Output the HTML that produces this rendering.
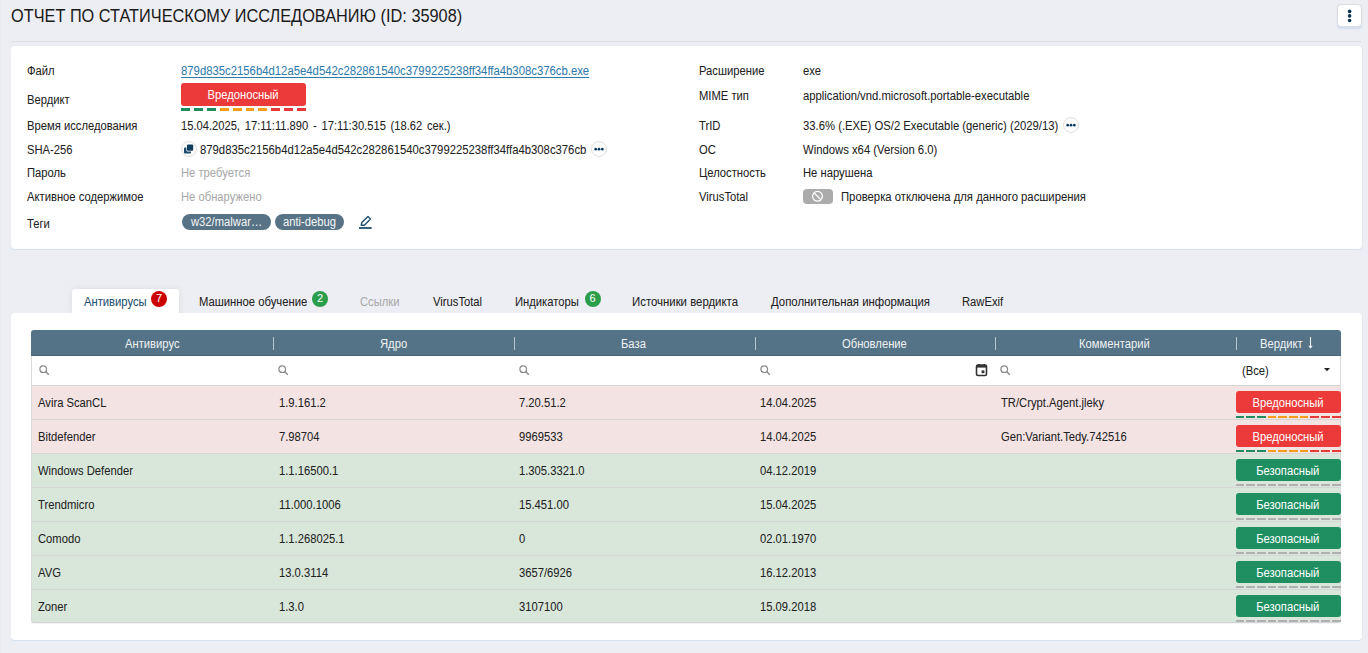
<!DOCTYPE html>
<html><head><meta charset="utf-8"><style>
*{box-sizing:border-box}
html,body{margin:0;padding:0}
body{width:1368px;height:653px;overflow:hidden;background:#edeef3;position:relative;font-family:"Liberation Sans",sans-serif;color:#212121}
.t{position:absolute;white-space:nowrap;font-size:12px;line-height:14px;transform:scaleX(0.936);transform-origin:0 0;-webkit-text-stroke:0.04px currentColor}
.gray{color:#a9a9a9}
.card{position:absolute;background:#fff;border-radius:4px;box-shadow:0 1px 0 #d2e2f2, 0.5px 0 1px rgba(0,0,0,0.03)}
.badge{position:absolute;border-radius:3px;color:#fff;font-size:12px;line-height:24px;display:flex;justify-content:center;white-space:nowrap}
.badge span{display:block;transform:scaleX(0.936)}
.red{background:#ec3a3a}
.grn{background:#1f8f62}
.dash{position:absolute;display:flex;height:3px}
.dash i{display:block;flex:1;height:100%}
.g{background:#1f8c5f}.o{background:#f59d1b}.r{background:#e5393a}.s{background:#b0b0b0}
.pill{position:absolute;height:16px;border-radius:8px;background:#587385}
.circ{position:absolute;border-radius:50%;border:1px solid #dedede;background:#fff}
.sep{position:absolute;width:1px;background:#b7c6d1}
.row{position:absolute;left:31px;width:1310px;height:34px;border-top:1px solid #d6d6d6;border-left:1px solid #d9d9d9;border-right:1px solid #d9d9d9}
.hdr{color:#eef2f5;-webkit-text-stroke:0}
.cnt{position:absolute;width:16px;height:16px;border-radius:50%;color:#fff;font-size:11px;line-height:14.5px;text-align:center}
</style></head><body>

<div style="position:absolute;left:0;top:0;width:1px;height:653px;background:#e8eaef"></div>
<div style="position:absolute;left:11px;top:6px;font-size:17.5px;line-height:20px;transform:scaleX(0.932);transform-origin:0 0;color:#1a1a1a;white-space:nowrap">ОТЧЕТ ПО СТАТИЧЕСКОМУ ИССЛЕДОВАНИЮ (ID: 35908)</div>
<div style="position:absolute;left:1337px;top:4.2px;width:25px;height:23.3px;background:#fff;border:1px solid #dcdde1;border-radius:4px;box-shadow:0 1.5px 1.5px rgba(120,170,230,0.22)"></div>
<svg style="position:absolute;left:1340px;top:5px" width="20" height="22" viewBox="1340 5 20 22"><circle cx="1349.6" cy="11.4" r="1.8" fill="#0e3353"/><circle cx="1349.6" cy="15.9" r="1.8" fill="#0e3353"/><circle cx="1349.6" cy="20.5" r="1.8" fill="#0e3353"/></svg>
<div style="position:absolute;left:11px;top:41px;width:1350px;height:1px;background:#dcdee4"></div>
<div class="card" style="left:11px;top:46px;width:1351px;height:203px"></div>
<div class="t " style="left:27px;top:64px;">Файл</div>
<div class="t " style="left:27px;top:93px;">Вердикт</div>
<div class="t " style="left:27px;top:119px;">Время исследования</div>
<div class="t " style="left:27px;top:143px;">SHA-256</div>
<div class="t " style="left:27px;top:166px;">Пароль</div>
<div class="t " style="left:27px;top:190px;">Активное содержимое</div>
<div class="t " style="left:27px;top:217px;">Теги</div>
<div class="t " style="left:699px;top:64px;">Расширение</div>
<div class="t " style="left:699px;top:89px;">MIME тип</div>
<div class="t " style="left:699px;top:119px;">TrID</div>
<div class="t " style="left:699px;top:143px;">ОС</div>
<div class="t " style="left:699px;top:166px;">Целостность</div>
<div class="t " style="left:699px;top:190px;">VirusTotal</div>
<div class="t " style="left:181px;top:64px;color:#2e7aab;text-decoration:underline;text-underline-offset:2px;transform:scaleX(0.9434)">879d835c2156b4d12a5e4d542c282861540c3799225238ff34ffa4b308c376cb.exe</div>
<div class="badge red" style="left:181px;top:83px;width:125px;height:23px"><span>Вредоносный</span></div>
<div class="dash" style="left:181px;top:108px;width:125px;gap:4px"><i class="g"></i><i class="g"></i><i class="g"></i><i class="o"></i><i class="o"></i><i class="o"></i><i class="o"></i><i class="r"></i><i class="r"></i><i class="r"></i></div>
<div class="t " style="left:181px;top:119px;word-spacing:1.8px;transform:scaleX(0.9300)">15.04.2025, 17:11:11.890 - 17:11:30.515 (18.62 сек.)</div>
<div class="circ" style="left:181px;top:141px;width:16px;height:16px"></div>
<svg style="position:absolute;left:181px;top:141px" width="16" height="16" viewBox="181 141 16 16"><rect x="184" y="147.4" width="7" height="6.2" rx="1" fill="#1d4d6e"/><rect x="186.4" y="144" width="7.4" height="7.4" rx="1.2" fill="#fff"/><rect x="187" y="144.6" width="6.2" height="6.2" rx="1" fill="#0f3d5e"/></svg>
<div class="t " style="left:199.5px;top:143px;;transform:scaleX(0.9424)">879d835c2156b4d12a5e4d542c282861540c3799225238ff34ffa4b308c376cb</div>
<div class="circ" style="left:591px;top:141px;width:16px;height:16px"></div>
<svg style="position:absolute;left:591px;top:141px" width="16" height="16" viewBox="-8 -8 16 16"><circle cx="-3.3" cy="0.2" r="1.35" fill="#0e3a5c"/><circle cx="0" cy="0.2" r="1.35" fill="#0e3a5c"/><circle cx="3.3" cy="0.2" r="1.35" fill="#0e3a5c"/></svg>
<div class="t gray" style="left:181px;top:166px;">Не требуется</div>
<div class="t gray" style="left:181px;top:190px;">Не обнаружено</div>
<div class="pill" style="left:182px;top:214px;width:89px"></div>
<div class="t " style="left:190.5px;top:215px;color:#f4f7f9;-webkit-text-stroke:0;transform:scaleX(0.9356)">w32/malwar…</div>
<div class="pill" style="left:275px;top:214px;width:69px"></div>
<div class="t " style="left:282.8px;top:215px;color:#f4f7f9;-webkit-text-stroke:0;transform:scaleX(0.9365)">anti-debug</div>
<svg style="position:absolute;left:358px;top:215px" width="15" height="15" viewBox="0 0 15 15"><path d="M3.2 10.3 L3.8 7.6 L10 1.5 L12.5 4 L6.3 10.2 Z" fill="none" stroke="#1d4e70" stroke-width="1.4" stroke-linejoin="round"/><line x1="1" y1="13" x2="13.6" y2="13" stroke="#1d4e70" stroke-width="1.8"/></svg>
<div class="t " style="left:803px;top:64px;">exe</div>
<div class="t " style="left:803px;top:89px;;transform:scaleX(0.9402)">application/vnd.microsoft.portable-executable</div>
<div class="t " style="left:803px;top:119px;;transform:scaleX(0.9403)">33.6% (.EXE) OS/2 Executable (generic) (2029/13)</div>
<div class="circ" style="left:1063.4px;top:117.4px;width:16px;height:16px"></div>
<svg style="position:absolute;left:1063.4px;top:117.4px" width="16" height="16" viewBox="-8 -8 16 16"><circle cx="-3.3" cy="0.2" r="1.35" fill="#0e3a5c"/><circle cx="0" cy="0.2" r="1.35" fill="#0e3a5c"/><circle cx="3.3" cy="0.2" r="1.35" fill="#0e3a5c"/></svg>
<div class="t " style="left:803px;top:143px;;transform:scaleX(0.9411)">Windows x64 (Version 6.0)</div>
<div class="t " style="left:803px;top:166px;">Не нарушена</div>
<div style="position:absolute;left:803px;top:189px;width:30px;height:14.6px;background:#ababab;border-radius:4px"></div>
<svg style="position:absolute;left:811px;top:190px" width="13" height="13" viewBox="0 0 13 13"><circle cx="6.5" cy="6.3" r="4.9" fill="none" stroke="#fff" stroke-width="1.3"/><line x1="3.1" y1="2.9" x2="9.9" y2="9.7" stroke="#fff" stroke-width="1.3"/></svg>
<div class="t " style="left:841px;top:190px;;transform:scaleX(0.9416)">Проверка отключена для данного расширения</div>
<div style="position:absolute;left:72px;top:289px;width:107px;height:26px;background:#fff;border-radius:3px 3px 0 0;box-shadow:0 0 7px rgba(30,40,60,0.09)"></div>
<div class="card" style="left:11px;top:313px;width:1351px;height:327px"></div>
<div class="t " style="left:84px;top:295px;color:#1d4e70">Антивирусы</div>
<div class="cnt" style="left:151px;top:291px;background:#c00">7</div>
<div class="t " style="left:199.2px;top:295px;;transform:scaleX(0.9393)">Машинное обучение</div>
<div class="cnt" style="left:312px;top:291px;background:#2c9e4b">2</div>
<div class="t gray" style="left:360.1px;top:295px;">Ссылки</div>
<div class="t " style="left:432.6px;top:295px;">VirusTotal</div>
<div class="t " style="left:515.2px;top:295px;">Индикаторы</div>
<div class="cnt" style="left:584.5px;top:291px;background:#2c9e4b">6</div>
<div class="t " style="left:632.3px;top:295px;;transform:scaleX(0.9490)">Источники вердикта</div>
<div class="t " style="left:770.6px;top:295px;;transform:scaleX(0.9475)">Дополнительная информация</div>
<div class="t " style="left:961.8px;top:295px;">RawExif</div>
<div style="position:absolute;left:31px;top:330px;width:1310px;height:26px;background:#557386;border-radius:3px 3px 0 0;border-bottom:1px solid #4b6678"></div>
<div class="t hdr" style="left:124.8px;top:337px;">Антивирус</div>
<div class="t hdr" style="left:379.5px;top:337px;">Ядро</div>
<div class="t hdr" style="left:621px;top:337px;">База</div>
<div class="t hdr" style="left:841.6px;top:337px;">Обновление</div>
<div class="t hdr" style="left:1079.2px;top:337px;">Комментарий</div>
<div class="t hdr" style="left:1259.9px;top:337px;">Вердикт</div>
<svg style="position:absolute;left:1306px;top:336px" width="9" height="14" viewBox="0 0 9 14"><line x1="4.5" y1="1" x2="4.5" y2="11" stroke="#eef2f5" stroke-width="1.1"/><path d="M2.3 9.8 L6.7 9.8 L4.5 12.7 Z" fill="#eef2f5"/></svg>
<div class="sep" style="left:273px;top:337px;height:13px"></div>
<div class="sep" style="left:513.5px;top:337px;height:13px"></div>
<div class="sep" style="left:754.5px;top:337px;height:13px"></div>
<div class="sep" style="left:995px;top:337px;height:13px"></div>
<div class="sep" style="left:1236px;top:337px;height:13px"></div>
<div style="position:absolute;left:31px;top:356px;width:1310px;height:30px;background:#fff;border-left:1px solid #d9d9d9;border-right:1px solid #d9d9d9;border-bottom:1px solid #d6d6d6"></div>
<svg style="position:absolute;left:38.5px;top:364.5px" width="11" height="11" viewBox="0 0 11 11"><circle cx="4.2" cy="4.2" r="3.3" fill="none" stroke="#8a8a8a" stroke-width="1.2"/><line x1="6.6" y1="6.6" x2="9.8" y2="9.8" stroke="#8a8a8a" stroke-width="1.4"/></svg>
<svg style="position:absolute;left:277.5px;top:364.5px" width="11" height="11" viewBox="0 0 11 11"><circle cx="4.2" cy="4.2" r="3.3" fill="none" stroke="#8a8a8a" stroke-width="1.2"/><line x1="6.6" y1="6.6" x2="9.8" y2="9.8" stroke="#8a8a8a" stroke-width="1.4"/></svg>
<svg style="position:absolute;left:518.5px;top:364.5px" width="11" height="11" viewBox="0 0 11 11"><circle cx="4.2" cy="4.2" r="3.3" fill="none" stroke="#8a8a8a" stroke-width="1.2"/><line x1="6.6" y1="6.6" x2="9.8" y2="9.8" stroke="#8a8a8a" stroke-width="1.4"/></svg>
<svg style="position:absolute;left:759.5px;top:364.5px" width="11" height="11" viewBox="0 0 11 11"><circle cx="4.2" cy="4.2" r="3.3" fill="none" stroke="#8a8a8a" stroke-width="1.2"/><line x1="6.6" y1="6.6" x2="9.8" y2="9.8" stroke="#8a8a8a" stroke-width="1.4"/></svg>
<svg style="position:absolute;left:1000px;top:364.5px" width="11" height="11" viewBox="0 0 11 11"><circle cx="4.2" cy="4.2" r="3.3" fill="none" stroke="#8a8a8a" stroke-width="1.2"/><line x1="6.6" y1="6.6" x2="9.8" y2="9.8" stroke="#8a8a8a" stroke-width="1.4"/></svg>
<svg style="position:absolute;left:975px;top:363px" width="13" height="14" viewBox="0 0 13 14"><rect x="1.5" y="2" width="10" height="10.5" rx="1.5" fill="none" stroke="#333" stroke-width="1.6"/><rect x="1.5" y="2" width="10" height="2.6" fill="#333"/><rect x="3" y="1" width="1.5" height="2" fill="#333"/><rect x="8.5" y="1" width="1.5" height="2" fill="#333"/><rect x="6.6" y="7.4" width="2.8" height="2.8" fill="#333"/></svg>
<div class="t " style="left:1241.7px;top:364px;">(Все)</div>
<svg style="position:absolute;left:1324px;top:368px" width="6" height="4" viewBox="0 0 6 4"><path d="M0 0 L6 0 L3 3.2 Z" fill="#222"/></svg>
<div class="row" style="top:385px;background:#f4e3e3"></div>
<div class="t " style="left:38.1px;top:396px;">Avira ScanCL</div>
<div class="t " style="left:279px;top:396px;">1.9.161.2</div>
<div class="t " style="left:519.4px;top:396px;">7.20.51.2</div>
<div class="t " style="left:760.2px;top:396px;">14.04.2025</div>
<div class="t " style="left:1001px;top:396px;">TR/Crypt.Agent.jleky</div>
<div class="badge red" style="left:1235.5px;top:391px;width:105px;height:22px"><span>Вредоносный</span></div>
<div class="dash" style="left:1235.5px;top:415.5px;width:105px;gap:2px;height:2.5px"><i class="g"></i><i class="g"></i><i class="g"></i><i class="o"></i><i class="o"></i><i class="o"></i><i class="o"></i><i class="r"></i><i class="r"></i><i class="r"></i></div>
<div class="row" style="top:419px;background:#f4e3e3"></div>
<div class="t " style="left:38.1px;top:430px;">Bitdefender</div>
<div class="t " style="left:279px;top:430px;">7.98704</div>
<div class="t " style="left:519.4px;top:430px;">9969533</div>
<div class="t " style="left:760.2px;top:430px;">14.04.2025</div>
<div class="t " style="left:1001px;top:430px;">Gen:Variant.Tedy.742516</div>
<div class="badge red" style="left:1235.5px;top:425px;width:105px;height:22px"><span>Вредоносный</span></div>
<div class="dash" style="left:1235.5px;top:449.5px;width:105px;gap:2px;height:2.5px"><i class="g"></i><i class="g"></i><i class="g"></i><i class="o"></i><i class="o"></i><i class="o"></i><i class="o"></i><i class="r"></i><i class="r"></i><i class="r"></i></div>
<div class="row" style="top:453px;background:#d8e7da"></div>
<div class="t " style="left:38.1px;top:464px;">Windows Defender</div>
<div class="t " style="left:279px;top:464px;">1.1.16500.1</div>
<div class="t " style="left:519.4px;top:464px;">1.305.3321.0</div>
<div class="t " style="left:760.2px;top:464px;">04.12.2019</div>
<div class="badge grn" style="left:1235.5px;top:459px;width:105px;height:22px"><span>Безопасный</span></div>
<div class="dash" style="left:1235.5px;top:483.5px;width:105px;gap:2px;height:2.5px"><i class="s"></i><i class="s"></i><i class="s"></i><i class="s"></i><i class="s"></i><i class="s"></i><i class="s"></i><i class="s"></i><i class="s"></i><i class="s"></i></div>
<div class="row" style="top:487px;background:#d8e7da"></div>
<div class="t " style="left:38.1px;top:498px;">Trendmicro</div>
<div class="t " style="left:279px;top:498px;">11.000.1006</div>
<div class="t " style="left:519.4px;top:498px;">15.451.00</div>
<div class="t " style="left:760.2px;top:498px;">15.04.2025</div>
<div class="badge grn" style="left:1235.5px;top:493px;width:105px;height:22px"><span>Безопасный</span></div>
<div class="dash" style="left:1235.5px;top:517.5px;width:105px;gap:2px;height:2.5px"><i class="s"></i><i class="s"></i><i class="s"></i><i class="s"></i><i class="s"></i><i class="s"></i><i class="s"></i><i class="s"></i><i class="s"></i><i class="s"></i></div>
<div class="row" style="top:521px;background:#d8e7da"></div>
<div class="t " style="left:38.1px;top:532px;">Comodo</div>
<div class="t " style="left:279px;top:532px;">1.1.268025.1</div>
<div class="t " style="left:519.4px;top:532px;">0</div>
<div class="t " style="left:760.2px;top:532px;">02.01.1970</div>
<div class="badge grn" style="left:1235.5px;top:527px;width:105px;height:22px"><span>Безопасный</span></div>
<div class="dash" style="left:1235.5px;top:551.5px;width:105px;gap:2px;height:2.5px"><i class="s"></i><i class="s"></i><i class="s"></i><i class="s"></i><i class="s"></i><i class="s"></i><i class="s"></i><i class="s"></i><i class="s"></i><i class="s"></i></div>
<div class="row" style="top:555px;background:#d8e7da"></div>
<div class="t " style="left:38.1px;top:566px;">AVG</div>
<div class="t " style="left:279px;top:566px;">13.0.3114</div>
<div class="t " style="left:519.4px;top:566px;">3657/6926</div>
<div class="t " style="left:760.2px;top:566px;">16.12.2013</div>
<div class="badge grn" style="left:1235.5px;top:561px;width:105px;height:22px"><span>Безопасный</span></div>
<div class="dash" style="left:1235.5px;top:585.5px;width:105px;gap:2px;height:2.5px"><i class="s"></i><i class="s"></i><i class="s"></i><i class="s"></i><i class="s"></i><i class="s"></i><i class="s"></i><i class="s"></i><i class="s"></i><i class="s"></i></div>
<div class="row" style="top:589px;background:#d8e7da;height:34px;border-bottom:1px solid #cfd2d0;border-radius:0 0 3px 3px;box-shadow:0 1px 1px rgba(0,0,0,0.05)"></div>
<div class="t " style="left:38.1px;top:600px;">Zoner</div>
<div class="t " style="left:279px;top:600px;">1.3.0</div>
<div class="t " style="left:519.4px;top:600px;">3107100</div>
<div class="t " style="left:760.2px;top:600px;">15.09.2018</div>
<div class="badge grn" style="left:1235.5px;top:595px;width:105px;height:22px"><span>Безопасный</span></div>
<div class="dash" style="left:1235.5px;top:619.5px;width:105px;gap:2px;height:2.5px"><i class="s"></i><i class="s"></i><i class="s"></i><i class="s"></i><i class="s"></i><i class="s"></i><i class="s"></i><i class="s"></i><i class="s"></i><i class="s"></i></div>
</body></html>
